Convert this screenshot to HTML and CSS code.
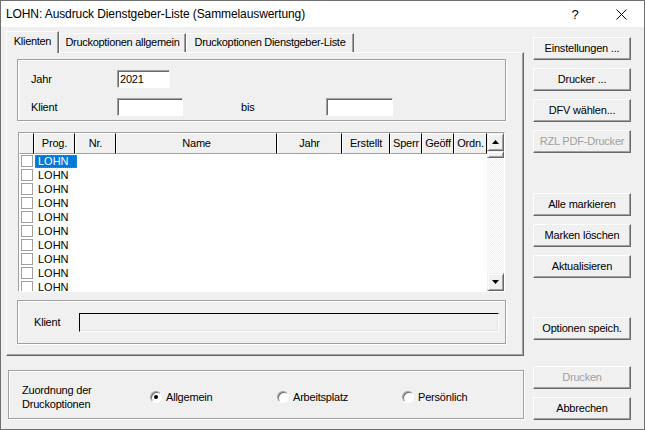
FILE: index.html
```html
<!DOCTYPE html>
<html lang="de">
<head>
    <meta charset="UTF-8">
    <title>LOHN: Ausdruck Dienstgeber-Liste (Sammelauswertung)</title>
    <link rel="stylesheet" href="styles.css">
</head>
<body>
<div class="window">
    <div class="titlebar">
        <span class="title">LOHN: Ausdruck Dienstgeber-Liste (Sammelauswertung)</span>
        <span class="help">?</span>
        <span class="close">
            <svg width="11" height="11" viewBox="0 0 11 11"><path d="M0.5 0.5 L10.5 10.5 M10.5 0.5 L0.5 10.5" stroke="#000" stroke-width="1" fill="none"/></svg>
        </span>
    </div>
    <div class="main">
        <div class="left">
            <div class="tabs">
                <div class="tab active">Klienten</div>
                <div class="tab t2">Druckoptionen allgemein</div>
                <div class="tab t3">Druckoptionen Dienstgeber-Liste</div>
            </div>
            <div class="panel">
                <div class="group filter">
                    <div class="row">
                        <span class="lbl">Jahr</span>
                        <span class="edit jahr">2021</span>
                    </div>
                    <div class="row">
                        <span class="lbl">Klient</span>
                        <span class="edit klient"></span>
                        <span class="bis">bis</span>
                        <span class="edit klient2"></span>
                    </div>
                </div>

                <div class="grid">
                    <div class="table">
                        <div class="head">
                            <div class="hc c0"></div>
                            <div class="hc c1">Prog.</div>
                            <div class="hc c2">Nr.</div>
                            <div class="hc c3">Name</div>
                            <div class="hc c4">Jahr</div>
                            <div class="hc c5">Erstellt</div>
                            <div class="hc c6">Sperr</div>
                            <div class="hc c7">Geöff</div>
                            <div class="hc c8">Ordn.</div>
                        </div>
                        <div class="rows">
                            <div class="r sel"><span class="cb"></span><span class="prog">LOHN</span></div>
                            <div class="r"><span class="cb"></span><span class="prog">LOHN</span></div>
                            <div class="r"><span class="cb"></span><span class="prog">LOHN</span></div>
                            <div class="r"><span class="cb"></span><span class="prog">LOHN</span></div>
                            <div class="r"><span class="cb"></span><span class="prog">LOHN</span></div>
                            <div class="r"><span class="cb"></span><span class="prog">LOHN</span></div>
                            <div class="r"><span class="cb"></span><span class="prog">LOHN</span></div>
                            <div class="r"><span class="cb"></span><span class="prog">LOHN</span></div>
                            <div class="r"><span class="cb"></span><span class="prog">LOHN</span></div>
                            <div class="r"><span class="cb"></span><span class="prog">LOHN</span></div>
                        </div>
                    </div>
                    <div class="vscroll">
                        <div class="sb-btn"><svg width="7" height="4" viewBox="0 0 7 4"><path d="M3.5 0 L7 4 L0 4 Z" fill="#000"/></svg></div>
                        <div class="thumb"></div>
                        <div class="track"></div>
                        <div class="sb-btn"><svg width="7" height="4" viewBox="0 0 7 4"><path d="M0 0 L7 0 L3.5 4 Z" fill="#000"/></svg></div>
                    </div>
                </div>

                <div class="group current">
                    <span class="lbl2">Klient</span>
                    <span class="field"></span>
                </div>
            </div>

            <div class="group options">
                <div class="opt-label">Zuordnung der<br>Druckoptionen</div>
                <div class="opt o1"><span class="dot on"></span>Allgemein</div>
                <div class="opt o2"><span class="dot"></span>Arbeitsplatz</div>
                <div class="opt"><span class="dot"></span>Persönlich</div>
            </div>
        </div>

        <div class="buttons">
            <div class="btn">Einstellungen ...</div>
            <div class="btn">Drucker ...</div>
            <div class="btn">DFV wählen...</div>
            <div class="btn disabled">RZL PDF-Drucker</div>
            <div class="btn gap1">Alle markieren</div>
            <div class="btn">Marken löschen</div>
            <div class="btn">Aktualisieren</div>
            <div class="btn gap2">Optionen speich.</div>
            <div class="btn gap3 disabled">Drucken</div>
            <div class="btn">Abbrechen</div>
        </div>
    </div>
</div>
</body>
</html>
```

FILE: styles.css
```css
body {
    margin: 0;
    background: #f0f0f0;
}
.window {
    width: 645px;
    height: 430px;
    box-sizing: border-box;
    border: 1px solid #707070;
    background: #f0f0f0;
    font: 11px "Liberation Sans", Arial, sans-serif;
    letter-spacing: -0.2px;
    color: #000;
    overflow: hidden;
}
.titlebar {
    height: 26px;
    background: #fff;
    display: flex;
    align-items: center;
    padding-left: 5px;
    font-size: 12px;
    letter-spacing: -0.1px;
}
.title {
    flex: 1;
    white-space: nowrap;
}
.help {
    width: 12px;
    text-align: center;
    margin-right: 35px;
    font-size: 13px;
}
.close {
    width: 11px;
    height: 11px;
    margin-right: 17px;
    display: flex;
}
.main {
    display: flex;
    padding: 4px 0 0 5px;
}
.left {
    width: 518px;
}

/* tabs */
.tabs {
    display: flex;
    align-items: flex-end;
    height: 21px;
}
.tab {
    box-sizing: border-box;
    height: 19px;
    border: 1px solid;
    border-color: #fff #696969 transparent #fff;
    border-bottom: none;
    box-shadow: inset -1px 0 #a0a0a0;
    text-align: center;
    line-height: 17px;
    white-space: nowrap;
    letter-spacing: -0.3px;
}
.tab.active {
    width: 53px;
    height: 22px;
    margin-bottom: -1px;
    line-height: 19px;
    background: #f0f0f0;
    position: relative;
    z-index: 1;
}
.t2 { width: 127px; }
.t3 { width: 168px; }

.panel {
    box-sizing: border-box;
    height: 304px;
    border: 1px solid;
    border-color: #fff #696969 #696969 #fff;
    box-shadow: inset -1px -1px #a0a0a0;
    padding: 6px 0 0 10px;
}
.group {
    box-sizing: border-box;
    border: 1px solid #a0a0a0;
    box-shadow: inset 1px 1px #fff, 1px 1px #fff;
}

/* Jahr / Klient */
.filter {
    width: 489px;
    height: 62px;
    padding: 10px 0 0 13px;
}
.row {
    display: flex;
    align-items: center;
    height: 18px;
}
.row + .row {
    margin-top: 10px;
}
.lbl { width: 86px; }
.edit {
    box-sizing: border-box;
    height: 18px;
    background: #fff;
    border: 1px solid;
    border-color: #a0a0a0 #fff #fff #a0a0a0;
    box-shadow: inset 1px 1px #696969;
    padding-left: 2px;
    line-height: 16px;
}
.jahr { width: 53px; }
.klient { width: 66px; }
.klient2 { width: 67px; }
.bis {
    margin-left: 58px;
    width: 85px;
}

/* list */
.grid {
    box-sizing: border-box;
    width: 487px;
    height: 160px;
    margin: 11px 0 0 1px;
    border: 1px solid;
    border-color: #a0a0a0 #fff #fff #a0a0a0;
    background: #fff;
    display: flex;
}
.table {
    width: 468px;
    overflow: hidden;
}
.head {
    display: flex;
    height: 21px;
}
.hc {
    box-sizing: border-box;
    height: 21px;
    background: #f0f0f0;
    border-top: 1px solid #fff;
    border-left: 1px solid #fff;
    border-right: 1px solid #000;
    border-bottom: 1px solid #a0a0a0;
    text-align: center;
    line-height: 19px;
    overflow: hidden;
    white-space: nowrap;
}
.c0 { width: 15px; }
.c1 { width: 41px; }
.c2 { width: 41px; }
.c3 { width: 161px; }
.c4 { width: 65px; }
.c5 { width: 48px; }
.c6 { width: 32px; }
.c7 { width: 32px; }
.c8 { width: 33px; }
.rows {
    height: 137px;
    overflow: hidden;
}
.r {
    display: flex;
    align-items: center;
    height: 14px;
}
.cb {
    box-sizing: border-box;
    width: 12px;
    height: 12px;
    margin: 0 1px 0 2px;
    border: 1px solid #a0a0a0;
    background: #fff;
}
.prog {
    box-sizing: border-box;
    width: 42px;
    height: 13px;
    margin-left: 1px;
    padding-left: 3px;
    line-height: 13px;
    letter-spacing: 0;
}
.r.sel .prog {
    background: #0078d7;
    color: #fff;
    outline: 1px dotted #1ec31e;
    outline-offset: -1px;
}
.vscroll {
    width: 17px;
    display: flex;
    flex-direction: column;
}
.sb-btn, .thumb {
    box-sizing: border-box;
    border: 1px solid;
    border-color: #f0f0f0 #696969 #696969 #f0f0f0;
    box-shadow: inset 1px 1px #fff, inset -1px -1px #a0a0a0;
    background: #f0f0f0;
}
.sb-btn {
    height: 18px;
    display: flex;
    align-items: center;
    justify-content: center;
}
.thumb {
    height: 7px;
}
.track {
    flex: 1;
    background: repeating-conic-gradient(#fff 0 25%, #f0f0f0 0 50%) 0 0 / 2px 2px;
}

/* Klient display */
.current {
    width: 489px;
    height: 44px;
    margin-top: 8px;
    display: flex;
    align-items: center;
    padding-left: 16px;
}
.lbl2 { width: 45px; }
.field {
    box-sizing: border-box;
    width: 420px;
    height: 19px;
    border: 1px solid;
    border-color: #000 #fff #fff #000;
    box-shadow: inset -1px -1px #e3e3e3;
}

/* Zuordnung */
.options {
    width: 516px;
    height: 49px;
    margin: 14px 0 0 2px;
    display: flex;
    align-items: center;
    padding: 5px 0 0 13px;
}
.opt-label {
    width: 128px;
    line-height: 14px;
}
.opt {
    display: flex;
    align-items: center;
}
.o1 { width: 127px; }
.o2 { width: 125px; }
.dot {
    box-sizing: border-box;
    width: 12px;
    height: 12px;
    margin-right: 4px;
    border-radius: 50%;
    border: 1px solid;
    border-color: #a0a0a0 #fff #fff #a0a0a0;
    box-shadow: inset 1px 1px #696969;
    background: #fff;
    display: flex;
    align-items: center;
    justify-content: center;
}
.dot.on::after {
    content: "";
    width: 4px;
    height: 4px;
    border-radius: 50%;
    background: #000;
}

/* buttons */
.buttons {
    margin-left: 9px;
    padding-top: 6px;
    display: flex;
    flex-direction: column;
}
.btn {
    box-sizing: border-box;
    width: 98px;
    height: 23px;
    border: 1px solid;
    border-color: #fff #696969 #696969 #fff;
    box-shadow: inset -1px -1px #a0a0a0;
    text-align: center;
    line-height: 21px;
    white-space: nowrap;
}
.btn + .btn { margin-top: 8px; }
.btn.gap1 { margin-top: 40px; }
.btn.gap2 { margin-top: 39px; }
.btn.gap3 { margin-top: 26px; }
.btn.disabled { color: #a0a0a0; }
```
